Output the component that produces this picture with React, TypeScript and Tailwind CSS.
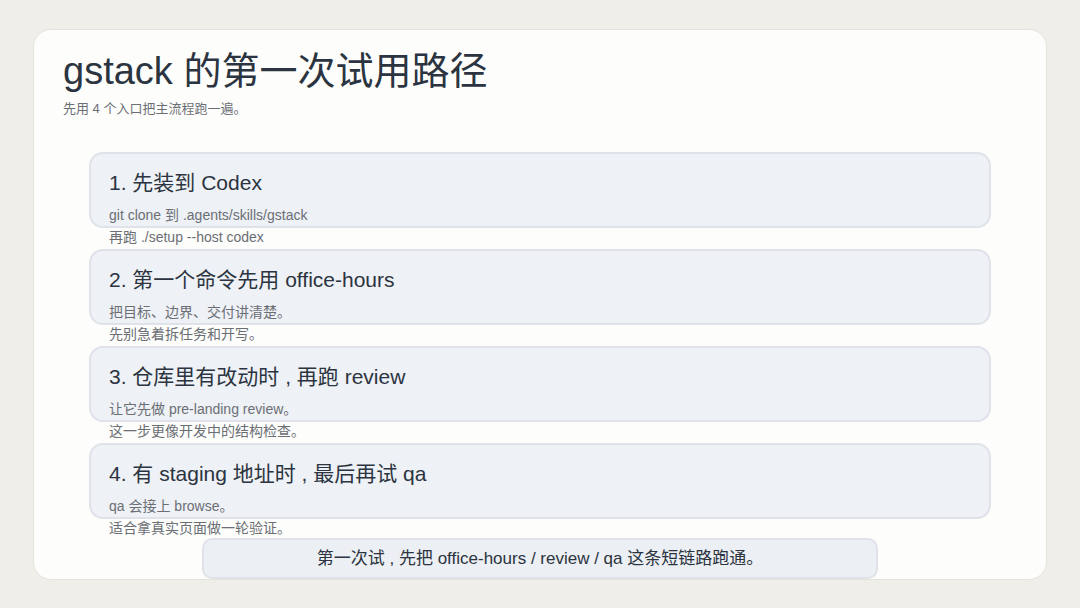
const items = [
  { t: "1. 先装到 Codex", a: "git clone 到 .agents/skills/gstack", b: "再跑 ./setup --host codex" },
  { t: "2. 第一个命令先用 office-hours", a: "把目标、边界、交付讲清楚。", b: "先别急着拆任务和开写。" },
  { t: "3. 仓库里有改动时 , 再跑 review", a: "让它先做 pre-landing review。", b: "这一步更像开发中的结构检查。" },
  { t: "4. 有 staging 地址时 , 最后再试 qa", a: "qa 会接上 browse。", b: "适合拿真实页面做一轮验证。" },
];

export default function App() {
  return (
    <div
      className="w-[1080px] h-[608px] bg-[#efeee9] pt-[29px] pl-[33px] overflow-hidden"
      style={{ fontFamily: '"Liberation Sans", "Noto Sans CJK SC", sans-serif' }}
    >
      <div className="w-[1014px] h-[551px] rounded-[18px] bg-[#fdfdfb] border border-[#e4e3de] pl-[29px] pt-[17px] flex flex-col">
        <h1 className="text-[38px] leading-[48px] text-[#2b3440]">gstack 的第一次试用路径</h1>
        <p className="text-[13px] leading-[18px] text-[#6b6f75] mt-[5px]">先用 4 个入口把主流程跑一遍。</p>
        <div className="flex flex-col gap-[21px] mt-[34px] ml-[26px]">
          {items.map((it) => (
            <div
              key={it.t}
              className="w-[902px] h-[76px] rounded-[14px] bg-[#eef1f5] border-2 border-[#dfe3e9] pl-[18px] pt-[16px]"
            >
              <div className="text-[21px] leading-[26px] text-[#2b3440]">{it.t}</div>
              <div className="mt-[8px] text-[14px] leading-[22px] text-[#6b6f75]">
                <div>{it.a}</div>
                <div>{it.b}</div>
              </div>
            </div>
          ))}
        </div>
        <div className="ml-[139px] mt-[19px] w-[676px] h-[43px] rounded-[10px] bg-[#eceff3] border-2 border-[#dfe3e9] flex items-center justify-center text-[17px] text-[#2b3440]">
          第一次试 , 先把 office-hours / review / qa 这条短链路跑通。
        </div>
      </div>
    </div>
  );
}
